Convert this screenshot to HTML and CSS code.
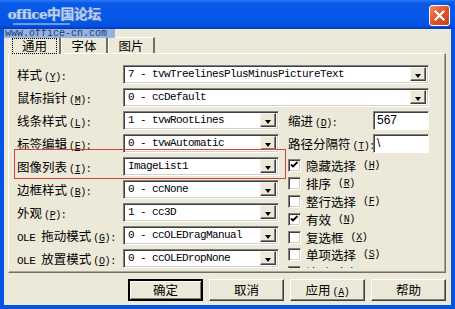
FILE: index.html
```html
<html>
<head>
<meta charset="UTF-8">
<link rel="stylesheet" href="styles.css">
<title>TreeView 属性页</title>
</head>
<body>
<div class="window">
    <!-- title bar with watermark logo -->
    <div class="titlebar">
        <div class="logo">
            <span class="logo-text"><span class="logo-en">office</span>中国论坛</span>
            <span class="logo-line"></span>
        </div>
        <span class="close">
            <svg width="11" height="11" viewBox="0 0 11 11"><path d="M1.5 1.5 L9.5 9.5 M9.5 1.5 L1.5 9.5" stroke="#fff" stroke-width="2.2" stroke-linecap="square"/></svg>
        </span>
    </div>
    <div class="watermark">www.office-cn.com</div>

    <div class="client">
        <div class="tabs">
            <div class="tab active"><span class="focus">通用</span></div>
            <div class="tab">字体</div>
            <div class="tab">图片</div>
        </div>

        <div class="panel">
            <div class="line">
                <span class="lbl">样式<span class="en">(<u>Y</u>):</span></span>
                <div class="combo"><span class="val">7 - tvwTreelinesPlusMinusPictureText</span><span class="drop"></span></div>
            </div>
            <div class="line">
                <span class="lbl">鼠标指针<span class="en">(<u>M</u>):</span></span>
                <div class="combo"><span class="val">0 - ccDefault</span><span class="drop"></span></div>
            </div>

            <div class="split">
                <div class="left">
                    <div class="line">
                        <span class="lbl">线条样式<span class="en">(<u>L</u>):</span></span>
                        <div class="combo"><span class="val">1 - tvwRootLines</span><span class="drop"></span></div>
                    </div>
                    <div class="line">
                        <span class="lbl">标签编辑<span class="en">(<u>E</u>):</span></span>
                        <div class="combo"><span class="val">0 - tvwAutomatic</span><span class="drop"></span></div>
                    </div>
                    <div class="line marked">
                        <span class="lbl">图像列表<span class="en">(<u>I</u>):</span></span>
                        <div class="combo"><span class="val">ImageList1</span><span class="drop"></span></div>
                    </div>
                    <div class="line">
                        <span class="lbl">边框样式<span class="en">(<u>B</u>):</span></span>
                        <div class="combo"><span class="val">0 - ccNone</span><span class="drop"></span></div>
                    </div>
                    <div class="line">
                        <span class="lbl">外观<span class="en">(<u>P</u>):</span></span>
                        <div class="combo"><span class="val">1 - cc3D</span><span class="drop"></span></div>
                    </div>
                    <div class="line">
                        <span class="lbl"><span class="ole">OLE</span>拖动模式<span class="en">(<u>G</u>):</span></span>
                        <div class="combo"><span class="val">0 - ccOLEDragManual</span><span class="drop"></span></div>
                    </div>
                    <div class="line">
                        <span class="lbl"><span class="ole">OLE</span>放置模式<span class="en">(<u>O</u>):</span></span>
                        <div class="combo"><span class="val">0 - ccOLEDropNone</span><span class="drop"></span></div>
                    </div>
                </div>

                <div class="right">
                    <div class="line">
                        <span class="rlbl">缩进<span class="en">(<u>D</u>):</span></span>
                        <div class="edit">567</div>
                    </div>
                    <div class="line">
                        <span class="rlbl">路径分隔符<span class="en">(<u>T</u>):</span></span>
                        <div class="edit">\</div>
                    </div>
                    <div class="checks">
                        <div class="chk"><span class="box on"></span>隐藏选择<span class="en">(<u>H</u>)</span></div>
                        <div class="chk"><span class="box"></span>排序<span class="en">(<u>R</u>)</span></div>
                        <div class="chk"><span class="box"></span>整行选择<span class="en">(<u>F</u>)</span></div>
                        <div class="chk"><span class="box on"></span>有效<span class="en">(<u>N</u>)</span></div>
                        <div class="chk"><span class="box"></span>复选框<span class="en">(<u>X</u>)</span></div>
                        <div class="chk"><span class="box"></span>单项选择<span class="en">(<u>S</u>)</span></div>
                        <div class="chk"><span class="box"></span>滚动<span class="en">(<u>C</u>)</span></div>
                    </div>
                </div>
            </div>
        </div>

        <div class="buttons">
            <div class="btn default">确定</div>
            <div class="btn">取消</div>
            <div class="btn">应用<span class="en">(<u>A</u>)</span></div>
            <div class="btn">帮助</div>
        </div>
    </div>
</div>
</body>
</html>
```

FILE: styles.css
```css
*{
    box-sizing: border-box;
}
body{
    margin: 0;
    font-family: "Noto Sans CJK SC", sans-serif;
    font-size: 12.5px;
    color: #000;
}
u{
    text-decoration: underline;
    text-underline-offset: 1px;
}
.window{
    position: relative;
    width: 455px;
    height: 309px;
    background: #0553e6;
    display: flex;
    flex-direction: column;
}
.titlebar{
    height: 29px;
    background: linear-gradient(#2c7bf2 0px, #0a5ae9 3px, #0556e6 20px, #0450de 26px, #0238b8 29px);
    display: flex;
    align-items: flex-start;
    justify-content: space-between;
    padding: 5px 5px 0 8px;
}
.logo{
    display: flex;
    flex-direction: column;
    opacity: 0.85;
}
.logo-text{
    font-family: "Noto Sans CJK SC", sans-serif;
    font-weight: bold;
    font-size: 13.5px;
    line-height: 17px;
    color: #dce6f8;
    text-shadow: 1px 1px 0 #3f6fc8, -1px 0 0 #7aa0e0;
    white-space: nowrap;
}
.logo-en{
    font-family: "DejaVu Serif", serif;
    font-size: 13px;
    letter-spacing: -0.3px;
}
.logo-line{
    width: 57px;
    height: 2px;
    margin: 0 0 0 5px;
    background: #7ea6e6;
}
.close{
    width: 21px;
    height: 21px;
    border: 1px solid #fff;
    border-radius: 3px;
    background: linear-gradient(135deg, #f08a68, #e0512a 50%, #c8401c);
    display: flex;
    align-items: center;
    justify-content: center;
}
/* watermark strip over the tabs */
.watermark{
    position: absolute;
    left: 4px;
    top: 29px;
    width: 111px;
    height: 9px;
    background: rgba(120, 160, 220, 0.75);
    font-family: "Liberation Mono", monospace;
    font-size: 10px;
    line-height: 9px;
    color: #1c3a78;
    padding-left: 1px;
    z-index: 2;
}
.client{
    flex: 1;
    margin: 0 4px 4px 4px;
    background: #ece9d8;
    padding: 6px 5px 0 4px;
    display: flex;
    flex-direction: column;
}
.tabs{
    display: flex;
    height: 18px;
    align-items: flex-end;
    padding-left: 1px;
}
.tab{
    height: 16px;
    border-top: 1px solid #fff;
    border-left: 1px solid #fff;
    border-right: 2px solid #716f64;
    line-height: 15px;
    width: 47px;
    text-align: center;
}
.tab.active{
    height: 19px;
    width: 52px;
    margin-bottom: -1px;
    background: #ece9d8;
    position: relative;
    z-index: 1;
    padding: 2px 2px 0 2px;
}
.focus{
    display: block;
    border: 1px dotted #000;
    line-height: 14px;
    height: 16px;
}
.panel{
    height: 220px;
    border: 1px solid;
    border-color: #fff #716f64 #716f64 #fff;
    box-shadow: inset -1px -1px 0 #aca899;
    padding: 11px 16px 0 8px;
    display: flex;
    flex-direction: column;
    gap: 4px;
}
.line{
    display: flex;
    align-items: center;
    height: 19px;
    position: relative;
}
.lbl{
    width: 106px;
    flex: none;
    white-space: nowrap;
}
.en{
    font-family: "Liberation Mono", monospace;
    font-size: 10px;
    letter-spacing: -0.4px;
    padding-left: 2px;
}
.ole{
    font-family: "Liberation Mono", monospace;
    font-size: 11px;
    letter-spacing: -0.5px;
    padding-right: 6px;
}
.combo{
    flex: 1;
    height: 19px;
    background: #fff;
    border: 1px solid;
    border-color: #808080 #fff #fff #808080;
    box-shadow: inset 1px 1px 0 #404040, inset -1px -1px 0 #d4d0c8;
    display: flex;
    padding: 1px 2px 2px 2px;
}
.val{
    flex: 1;
    font-family: "Liberation Mono", monospace;
    font-size: 11px;
    letter-spacing: -0.6px;
    line-height: 15px;
    padding-left: 2px;
}
.drop{
    width: 16px;
    background: #ece9d8;
    border: 1px solid;
    border-color: #f4f3ee #404040 #404040 #f4f3ee;
    box-shadow: inset -1px -1px 0 #808080;
    position: relative;
}
.drop::after{
    content: "";
    position: absolute;
    left: 4px;
    top: 6px;
    border-left: 3.5px solid transparent;
    border-right: 3.5px solid transparent;
    border-top: 4px solid #000;
}
.split{
    display: flex;
    gap: 9px;
}
.left{
    width: 262px;
    display: flex;
    flex-direction: column;
    gap: 4px;
}
.right{
    flex: 1;
    display: flex;
    flex-direction: column;
    gap: 4px;
}
.marked::before{
    content: "";
    position: absolute;
    left: -3px;
    right: -7px;
    top: -8px;
    bottom: -3px;
    border: 1px solid #d0403c;
}
.rlbl{
    width: 85px;
    flex: none;
    white-space: nowrap;
}
.edit{
    flex: 1;
    height: 19px;
    background: #fff;
    border: 1px solid;
    border-color: #808080 #fff #fff #808080;
    box-shadow: inset 1px 1px 0 #404040;
    font-family: "Liberation Sans", sans-serif;
    font-size: 12px;
    line-height: 16px;
    padding-left: 3px;
}
.checks{
    height: 111px;
    overflow: hidden;
    display: flex;
    flex-direction: column;
}
.chk{
    height: 17.8px;
    flex: none;
    display: flex;
    align-items: center;
    gap: 5px;
    white-space: nowrap;
}
.box{
    width: 13px;
    height: 13px;
    flex: none;
    background: #fff;
    border: 1px solid;
    border-color: #808080 #fff #fff #808080;
    box-shadow: inset 1px 1px 0 #404040, inset -1px -1px 0 #d4d0c8;
}
.box.on{
    background: #fff url("data:image/svg+xml;utf8,<svg xmlns='http://www.w3.org/2000/svg' width='11' height='11'><path d='M2 4.5 L4 6.5 L8.5 2' stroke='black' stroke-width='1.8' fill='none'/></svg>") center no-repeat;
}
.buttons{
    display: flex;
    justify-content: flex-end;
    gap: 6px;
    margin-top: 6px;
}
.btn{
    width: 75px;
    height: 22px;
    border: 1px solid;
    border-color: #fff #404040 #404040 #fff;
    box-shadow: inset -1px -1px 0 #808080;
    text-align: center;
    line-height: 19px;
    white-space: nowrap;
}
.btn.default{
    border: 2px solid #000;
    box-shadow: inset 1px 1px 0 #fff, inset -1px -1px 0 #808080;
    line-height: 17px;
}
```
